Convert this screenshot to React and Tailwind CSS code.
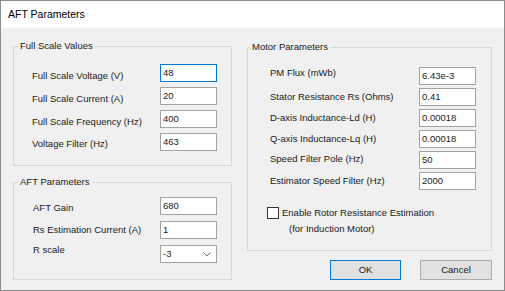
import React from "react";

function Field({ label, value, labelClass = "", focused = false }) {
  return (
    <div className="flex items-center h-[18px]">
      <span className={`flex-1 whitespace-nowrap leading-[12px] ${labelClass}`}>{label}</span>
      <div
        className={`w-[57px] h-[18px] bg-white border flex items-center pl-[2px] leading-[12px] ${
          focused ? "border-[#0078d7]" : "border-[#a3a3a3]"
        }`}
      >
        {value}
      </div>
    </div>
  );
}

function SelectField({ label, value, labelClass = "" }) {
  return (
    <div className="flex items-center h-[18px]">
      <span className={`flex-1 whitespace-nowrap leading-[12px] ${labelClass}`}>{label}</span>
      <div className="w-[57px] h-[18px] bg-white border border-[#a3a3a3] flex items-center justify-between pl-[2px] pr-[5px] leading-[12px]">
        <span>{value}</span>
        <svg width="8" height="5" viewBox="0 0 8 5" fill="none">
          <path d="M0.5 0.5 L4 4 L7.5 0.5" stroke="#6a6a6a" strokeWidth="1" />
        </svg>
      </div>
    </div>
  );
}

export default function App() {
  return (
    <div className="w-[505px] h-[291px] border border-[#8c8c8c] bg-[#f0f0f0] flex flex-col text-[9.5px] text-[#1a1a1a] font-['Liberation_Sans',Arial,sans-serif] overflow-hidden">
      <div className="h-[27px] bg-white flex items-center pl-[7px] text-[10.5px] text-black shrink-0">
        AFT Parameters
      </div>
      <div className="flex pt-[12px] pl-[12px] pr-[12px] gap-[15px]">
        {/* Left column */}
        <div className="w-[219px] flex flex-col">
          <fieldset className="border border-[#d9d9d9] m-0 p-0">
            <legend className="ml-[4px] px-[2px] leading-[12px]">Full Scale Values</legend>
            <div className="flex flex-col gap-[5px] pl-[18px] pr-[14px] pt-[12px] pb-[14px]">
              <Field label="Full Scale Voltage (V)" value="48" focused labelClass="pt-[6px]" />
              <Field label="Full Scale Current (A)" value="20" labelClass="pt-[5px]" />
              <Field label="Full Scale Frequency (Hz)" value="400" labelClass="pt-[5px]" />
              <Field label="Voltage Filter (Hz)" value="463" labelClass="pt-[4px]" />
            </div>
          </fieldset>
          <fieldset className="mt-[10px] border border-[#d9d9d9] m-0 p-0">
            <legend className="ml-[4px] px-[2px] leading-[12px]">AFT Parameters</legend>
            <div className="flex flex-col gap-[6px] pl-[19px] pr-[14px] pt-[9px] pb-[16px]">
              <Field label="AFT Gain" value="680" labelClass="pt-[3px]" />
              <Field label="Rs Estimation Current (A)" value="1" />
              <SelectField label="R scale" value="-3" labelClass="pb-[9px]" />
            </div>
          </fieldset>
        </div>
        {/* Right column */}
        <div className="w-[245px] flex flex-col">
          <fieldset className="mt-[1px] border border-[#d9d9d9] m-0 p-0">
            <legend className="ml-[2px] px-[2px] leading-[12px]">Motor Parameters</legend>
            <div className="pl-[22px] pr-[15px] pt-[14px] pb-[13px]">
              <div className="flex flex-col gap-[3px]">
                <Field label="PM Flux (mWb)" value="6.43e-3" labelClass="pb-[6px]" />
                <Field label="Stator Resistance Rs (Ohms)" value="0.41" />
                <Field label="D-axis Inductance-Ld (H)" value="0.00018" />
                <Field label="Q-axis Inductance-Lq (H)" value="0.00018" />
                <Field label="Speed Filter Pole (Hz)" value="50" labelClass="pb-[2px]" />
                <Field label="Estimator Speed Filter (Hz)" value="2000" />
              </div>
              <div className="mt-[15px] ml-[-3px] flex items-start gap-[3px] leading-[16px]">
                <div className="mt-[2px] w-[12px] h-[12px] bg-white border border-[#333333] shrink-0" />
                <div className="flex flex-col">
                  <span>Enable Rotor Resistance Estimation</span>
                  <span className="pl-[7px]">(for Induction Motor)</span>
                </div>
              </div>
            </div>
          </fieldset>
          <div className="mt-[9px] flex justify-end gap-[19px]">
            <div className="w-[71px] h-[20px] bg-[#e1e1e1] border border-[#0078d7] flex items-center justify-center">
              OK
            </div>
            <div className="w-[72px] h-[20px] bg-[#e1e1e1] border border-[#adadad] flex items-center justify-center">
              Cancel
            </div>
          </div>
        </div>
      </div>
    </div>
  );
}
